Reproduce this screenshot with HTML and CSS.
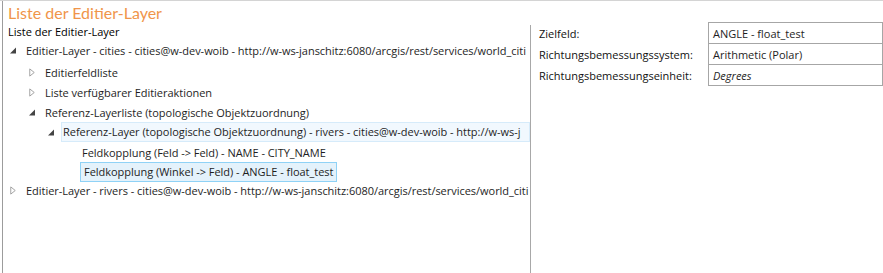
FILE: index.html
```html
<!DOCTYPE html>
<html lang="de">
<head>
    <meta charset="UTF-8">
    <title>Liste der Editier-Layer</title>
    <link rel="stylesheet" href="styles.css">
</head>
<body>
    <div class="frame">
        <h1 class="title">Liste der Editier-Layer</h1>
        <div class="content">
            <div class="tree-panel">
                <div class="caption">Liste der Editier-Layer</div>
                <ul class="tree">
                    <li class="node first">
                        <div class="row lvl1"><svg class="exp" viewBox="0 0 8 8"><path d="M7 1 L7 7 L1 7 Z" fill="#444"/></svg><span>Editier-Layer - cities - cities@w-dev-woib - http://w-ws-janschitz:6080/arcgis/rest/services/world_citi</span></div>
                    </li>
                    <li class="node">
                        <div class="row lvl2"><svg class="col" viewBox="0 0 8 10"><path d="M1.5 1 L6.5 5 L1.5 9 Z" fill="none" stroke="#9a9a9a"/></svg><span>Editierfeldliste</span></div>
                    </li>
                    <li class="node">
                        <div class="row lvl2"><svg class="col" viewBox="0 0 8 10"><path d="M1.5 1 L6.5 5 L1.5 9 Z" fill="none" stroke="#9a9a9a"/></svg><span>Liste verfügbarer Editieraktionen</span></div>
                    </li>
                    <li class="node">
                        <div class="row lvl2"><svg class="exp" viewBox="0 0 8 8"><path d="M7 1 L7 7 L1 7 Z" fill="#444"/></svg><span>Referenz-Layerliste (topologische Objektzuordnung)</span></div>
                    </li>
                    <li class="node">
                        <div class="row lvl3 hover"><svg class="exp" viewBox="0 0 8 8"><path d="M7 1 L7 7 L1 7 Z" fill="#444"/></svg><span>Referenz-Layer (topologische Objektzuordnung) - rivers - cities@w-dev-woib - http://w-ws-j</span></div>
                    </li>
                    <li class="node">
                        <div class="row lvl4"><span>Feldkopplung (Feld -&gt; Feld) - NAME - CITY_NAME</span></div>
                    </li>
                    <li class="node">
                        <div class="row lvl4 selected"><span>Feldkopplung (Winkel -&gt; Feld) - ANGLE - float_test</span></div>
                    </li>
                    <li class="node last">
                        <div class="row lvl1"><svg class="col" viewBox="0 0 8 10"><path d="M1.5 1 L6.5 5 L1.5 9 Z" fill="none" stroke="#9a9a9a"/></svg><span>Editier-Layer - rivers - cities@w-dev-woib - http://w-ws-janschitz:6080/arcgis/rest/services/world_citi</span></div>
                    </li>
                </ul>
            </div>
            <div class="props">
                <table class="prop-table">
                    <tr>
                        <td class="label">Zielfeld:</td>
                        <td class="value">ANGLE - float_test</td>
                    </tr>
                    <tr>
                        <td class="label">Richtungsbemessungssystem:</td>
                        <td class="value">Arithmetic (Polar)</td>
                    </tr>
                    <tr>
                        <td class="label">Richtungsbemessungseinheit:</td>
                        <td class="value italic">Degrees</td>
                    </tr>
                </table>
            </div>
        </div>
    </div>
</body>
</html>
```

FILE: styles.css
```css
html, body {
    margin: 0;
    padding: 0;
    background: #fff;
    height: 100%;
}
body {
    font-family: "Open Sans", "Noto Sans", sans-serif;
    font-size: 11px;
    color: #1e1e1e;
    border-top: 1px solid #d4d4d4;
    box-sizing: border-box;
    overflow: hidden;
}
.frame {
    margin-left: 2px;
    border-left: 1px solid #9c9c9c;
    height: 272px;
    display: flex;
    flex-direction: column;
}
.title {
    margin: 0;
    padding: 1px 0 0 5px;
    height: 22px;
    font-family: "Lato", "Open Sans", sans-serif;
    font-size: 16px;
    font-weight: normal;
    color: #f0954a;
    line-height: 21px;
}
.content {
    flex: 1;
    display: flex;
}
.tree-panel {
    width: 527px;
    overflow: hidden;
    white-space: nowrap;
}
.caption {
    padding-left: 5px;
    line-height: 16px;
    color: #000;
}
.tree {
    list-style: none;
    margin: 0;
    padding: 0;
    letter-spacing: -0.03px;
}
.node.first {
    margin-bottom: 2px;
}
.node.last {
    margin-top: -2px;
}
.row {
    height: 20px;
    display: flex;
    align-items: center;
    box-sizing: border-box;
}
.row span {
    padding: 0 2px;
}
.lvl1 { padding-left: 6px; }
.lvl2 { padding-left: 25px; }
.lvl3 { padding-left: 44px; }
.lvl4 { padding-left: 77px; }
.row svg {
    width: 8px;
    height: 9px;
    margin-right: 7px;
    flex: none;
}
.row.hover span {
    background: #f1f8fe;
    border: 1px solid #d6ebfa;
    line-height: 18px;
    margin-left: -1px;
    padding: 0 1px;
    flex: 1;
}
.row.selected span {
    background: #e4f2fb;
    border: 1px solid #8fd2f6;
    line-height: 18px;
    padding: 0 3px;
}
.props {
    flex: 1;
    border-left: 1px solid #a8a8a8;
    margin-top: 1px;
    padding-left: 8px;
}
.prop-table {
    border-collapse: collapse;
    margin-top: -3px;
    width: 100%;
}
.prop-table td {
    height: 20px;
    padding: 0;
}
.prop-table .label {
    width: 169px;
    color: #111;
}
.prop-table .value {
    border: 1px solid #a6a6a6;
    padding-left: 4px;
}
.prop-table .italic {
    font-style: italic;
}
```
